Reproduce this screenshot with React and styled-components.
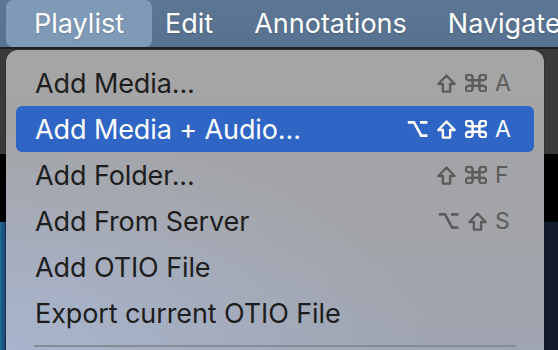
import React from "react";
import styled, { createGlobalStyle } from "styled-components";

const GlobalStyle = createGlobalStyle`
  html, body {
    margin: 0;
    padding: 0;
    width: 558px;
    height: 350px;
    overflow: hidden;
    background: #3a3a3a;
  }
  #root {
    width: 558px;
    height: 350px;
  }
`;

const Screen = styled.div`
  width: 558px;
  height: 350px;
  display: flex;
  flex-direction: column;
  overflow: hidden;
  font-family: "Inter", "Noto Sans", sans-serif;
`;

const MenuBar = styled.div`
  height: 47px;
  flex-shrink: 0;
  display: flex;
  align-items: center;
  gap: 13px;
  padding-left: 20px;
  background: linear-gradient(to bottom, #5c7794, #577190);
  border-bottom: 2px solid #1e1e1e;
  overflow: hidden;
`;

const BarItem = styled.div`
  position: relative;
  height: 100%;
  display: flex;
  align-items: center;
  padding: 0 14px;
  color: #ffffff;
  font-size: 27px;
  white-space: nowrap;
  text-shadow: 0 1px 2px rgba(0, 0, 0, 0.15);

  &::before {
    content: "";
    display: ${(p) => (p.$open ? "block" : "none")};
    position: absolute;
    top: 0;
    bottom: 0;
    left: -14px;
    right: -14px;
    border-radius: 7px;
    background: #7e9ab7;
    z-index: 0;
  }

  span {
    position: relative;
    z-index: 1;
  }
`;

const Workspace = styled.div`
  position: relative;
  flex: 1;
  min-height: 0;
  overflow: hidden;
  background:
    linear-gradient(
      to bottom,
      #3a3a3a 0,
      #3a3a3a 105px,
      #000 105px,
      #000 173px,
      transparent 173px
    ),
    linear-gradient(
      to right,
      #1b6e96 0,
      #1d3a68 6px,
      #121a2b 540px,
      #131b2c 100%
    );
`;

const Dropdown = styled.div`
  position: absolute;
  top: 1px;
  left: 6px;
  width: 538px;
  bottom: 0;
  box-sizing: border-box;
  padding-top: 10px;
  border-radius: 12px 12px 0 0;
  background:
    radial-gradient(
      ellipse 420px 220px at 0% 100%,
      rgba(170, 182, 208, 0.9),
      rgba(170, 182, 208, 0) 100%
    ),
    linear-gradient(to bottom, #a5a5a5 0%, #a2a4a8 60%, #9fa5b1 100%);
  box-shadow: 0 0 0 1px rgba(0, 0, 0, 0.15);
`;

const Row = styled.div`
  height: 46px;
  margin: 0 10px;
  padding: 0 21px 0 19px;
  display: flex;
  align-items: center;
  justify-content: space-between;
  border-radius: 6px;
  font-size: 27px;
  letter-spacing: -0.1px;
  color: ${(p) => (p.$active ? "#ffffff" : "#1d1d1d")};
  background: ${(p) => (p.$active ? "#2f66c5" : "transparent")};
`;

const Shortcut = styled.div`
  display: flex;
  align-items: center;
  color: ${(p) => (p.$active ? "#ffffff" : "#5c5c5c")};
`;

const Mods = styled.div`
  display: flex;
  align-items: center;
  justify-content: flex-end;
  gap: 9px;
`;

const Key = styled.span`
  width: 18px;
  margin-left: 8px;
  font-size: 23px;
  line-height: 1;
`;

const Separator = styled.div`
  height: 2px;
  margin: 9px 28px 0;
  background: #868c97;
`;

const Glyph = styled.svg`
  display: block;
  flex-shrink: 0;
`;

const OptionIcon = () => (
  <Glyph width="21" height="18" viewBox="0 0 21 18" fill="none">
    <path
      d="M0.8 2.4H7L14.2 15.6H20.4M13 2.4H20.4"
      stroke="currentColor"
      strokeWidth="2.6"
    />
  </Glyph>
);

const ShiftIcon = () => (
  <Glyph width="19" height="19" viewBox="0 0 19 19" fill="none">
    <path
      d="M9.5 1.5L17.6 10H13.1V17.6H5.9V10H1.4Z"
      stroke="currentColor"
      strokeWidth="2.4"
      strokeLinejoin="round"
    />
  </Glyph>
);

const CommandIcon = () => (
  <Glyph
    width="22"
    height="18"
    viewBox="2.4 2.4 19.2 19.2"
    preserveAspectRatio="none"
    fill="none"
  >
    <path
      d="M15 6v12a3 3 0 1 0 3-3H6a3 3 0 1 0 3 3V6a3 3 0 1 0-3 3h12a3 3 0 1 0-3-3"
      stroke="currentColor"
      strokeWidth="2.5"
      vectorEffect="non-scaling-stroke"
    />
  </Glyph>
);

const ICONS = { opt: OptionIcon, shift: ShiftIcon, cmd: CommandIcon };

const items = [
  { label: "Add Media...", mods: ["shift", "cmd"], key: "A" },
  { label: "Add Media + Audio...", mods: ["opt", "shift", "cmd"], key: "A", active: true },
  { label: "Add Folder...", mods: ["shift", "cmd"], key: "F" },
  { label: "Add From Server", mods: ["opt", "shift"], key: "S" },
  { label: "Add OTIO File" },
  { label: "Export current OTIO File" },
];

const menus = ["Playlist", "Edit", "Annotations", "Navigate"];

const App = () => {
  return (
    <>
      <GlobalStyle />
      <Screen>
        <MenuBar>
          {menus.map((m, i) => (
            <BarItem key={m} $open={i === 0}>
              <span>{m}</span>
            </BarItem>
          ))}
        </MenuBar>
        <Workspace>
          <Dropdown>
            {items.map((item) => (
              <Row key={item.label} $active={item.active}>
                <span>{item.label}</span>
                {item.key && (
                  <Shortcut $active={item.active}>
                    <Mods>
                      {item.mods.map((m) => {
                        const Icon = ICONS[m];
                        return <Icon key={m} />;
                      })}
                    </Mods>
                    <Key>{item.key}</Key>
                  </Shortcut>
                )}
              </Row>
            ))}
            <Separator />
          </Dropdown>
        </Workspace>
      </Screen>
    </>
  );
};

export default App;
